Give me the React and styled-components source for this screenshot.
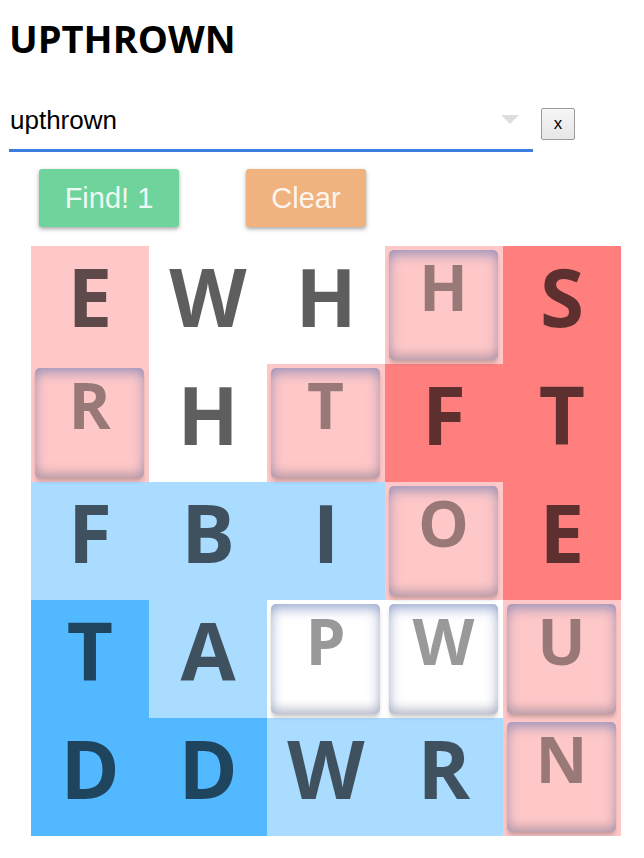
import React, { useState } from "react";
import styled, { createGlobalStyle } from "styled-components";

const GlobalStyle = createGlobalStyle`
  body {
    margin: 0;
    background: #ffffff;
    font-family: "Liberation Sans", Arial, sans-serif;
  }
`;

const COLORS = {
  white: "#ffffff",
  pink: "#ffc8c8",
  red: "#ff7f7f",
  sky: "#aadcff",
  blue: "#52b8ff",
};

// letter, cell colour, pressed tile
const BOARD = [
  ["E", "pink"], ["W", "white"], ["H", "white"], ["H", "pink", true], ["S", "red"],
  ["R", "pink", true], ["H", "white"], ["T", "pink", true], ["F", "red"], ["T", "red"],
  ["F", "sky"], ["B", "sky"], ["I", "sky"], ["O", "pink", true], ["E", "red"],
  ["T", "blue"], ["A", "sky"], ["P", "white", true], ["W", "white", true], ["U", "pink", true],
  ["D", "blue"], ["D", "blue"], ["W", "sky"], ["R", "sky"], ["N", "pink", true],
];

const App = () => {
  const [word, setWord] = useState("upthrown");

  return (
    <>
      <GlobalStyle />
      <Page>
        <Title>UPTHROWN</Title>

        <SearchRow>
          <SelectBox>
            <WordInput value={word} onChange={(e) => setWord(e.target.value)} />
            <Arrow />
          </SelectBox>
          <ResetButton onClick={() => setWord("")}>x</ResetButton>
        </SearchRow>

        <Actions>
          <ActionButton $bg="#6fd49b" $width={140}>Find! 1</ActionButton>
          <ActionButton $bg="#f0b27e" $width={120}>Clear</ActionButton>
        </Actions>

        <Board>
          {BOARD.map(([letter, color, pressed], i) => (
            <Cell key={i} $bg={COLORS[color]}>
              {pressed ? <Tile>{letter}</Tile> : letter}
            </Cell>
          ))}
        </Board>
      </Page>
    </>
  );
};

const Page = styled.div`
  padding: 16px 0 0 9px;
`;

const Title = styled.h1`
  margin: 0;
  font-family: "Open Sans", "Noto Sans", sans-serif;
  font-weight: 700;
  font-size: 38px;
  line-height: 44px;
  color: #000;
`;

const SearchRow = styled.div`
  display: flex;
  align-items: flex-start;
  gap: 8px;
  margin-top: 40px;
`;

const SelectBox = styled.div`
  width: 524px;
  display: flex;
  align-items: center;
  padding-bottom: 9px;
  border-bottom: 3px solid #3a7ee0;
`;

const WordInput = styled.input`
  flex: 1;
  min-width: 0;
  height: 40px;
  border: none;
  outline: none;
  padding: 0 0 0 1px;
  margin: 0;
  background: transparent;
  font-family: "Liberation Sans", Arial, sans-serif;
  font-size: 26px;
  color: #000;
`;

const Arrow = styled.span`
  width: 0;
  height: 0;
  margin: 0 14px 2px 0;
  border-left: 9px solid transparent;
  border-right: 9px solid transparent;
  border-top: 9px solid #dddddd;
`;

const ResetButton = styled.button`
  margin-top: 8px;
  width: 34px;
  height: 32px;
  padding: 0;
  border: 1px solid #9a9a9a;
  border-radius: 2px;
  background: linear-gradient(#f6f6f6, #e6e6e6);
  font-family: "Liberation Sans", Arial, sans-serif;
  font-size: 17px;
  color: #000;
`;

const Actions = styled.div`
  display: flex;
  gap: 67px;
  margin: 17px 0 0 30px;
`;

const ActionButton = styled.button`
  width: ${(p) => p.$width}px;
  height: 58px;
  padding: 0;
  border: none;
  border-radius: 3px;
  background: ${(p) => p.$bg};
  box-shadow: 0 2px 4px rgba(0, 0, 0, 0.35);
  font-family: "Liberation Sans", Arial, sans-serif;
  font-size: 29px;
  color: rgba(255, 255, 255, 0.9);
`;

const Board = styled.div`
  display: grid;
  grid-template-columns: repeat(5, 118px);
  grid-auto-rows: 118px;
  margin: 19px 0 0 22px;
  width: 590px;
`;

const Cell = styled.div`
  background: ${(p) => p.$bg};
  text-align: center;
  font-family: "Open Sans", "Noto Sans", sans-serif;
  font-weight: 700;
  font-size: 80px;
  line-height: 100px;
  color: rgba(0, 0, 0, 0.63);
`;

const Tile = styled.div`
  margin: 4px 5px 0 4px;
  height: 110px;
  border-radius: 5px;
  font-size: 64px;
  line-height: 74px;
  color: rgba(0, 0, 0, 0.4);
  filter: blur(0.7px);
  box-shadow:
    inset 0 0 12px 2px rgba(90, 110, 165, 0.38),
    inset 0 12px 14px -8px rgba(80, 110, 185, 0.4),
    inset 0 -12px 14px -8px rgba(0, 0, 0, 0.16),
    0 4px 4px -1px rgba(0, 0, 0, 0.22);
`;

export default App;
